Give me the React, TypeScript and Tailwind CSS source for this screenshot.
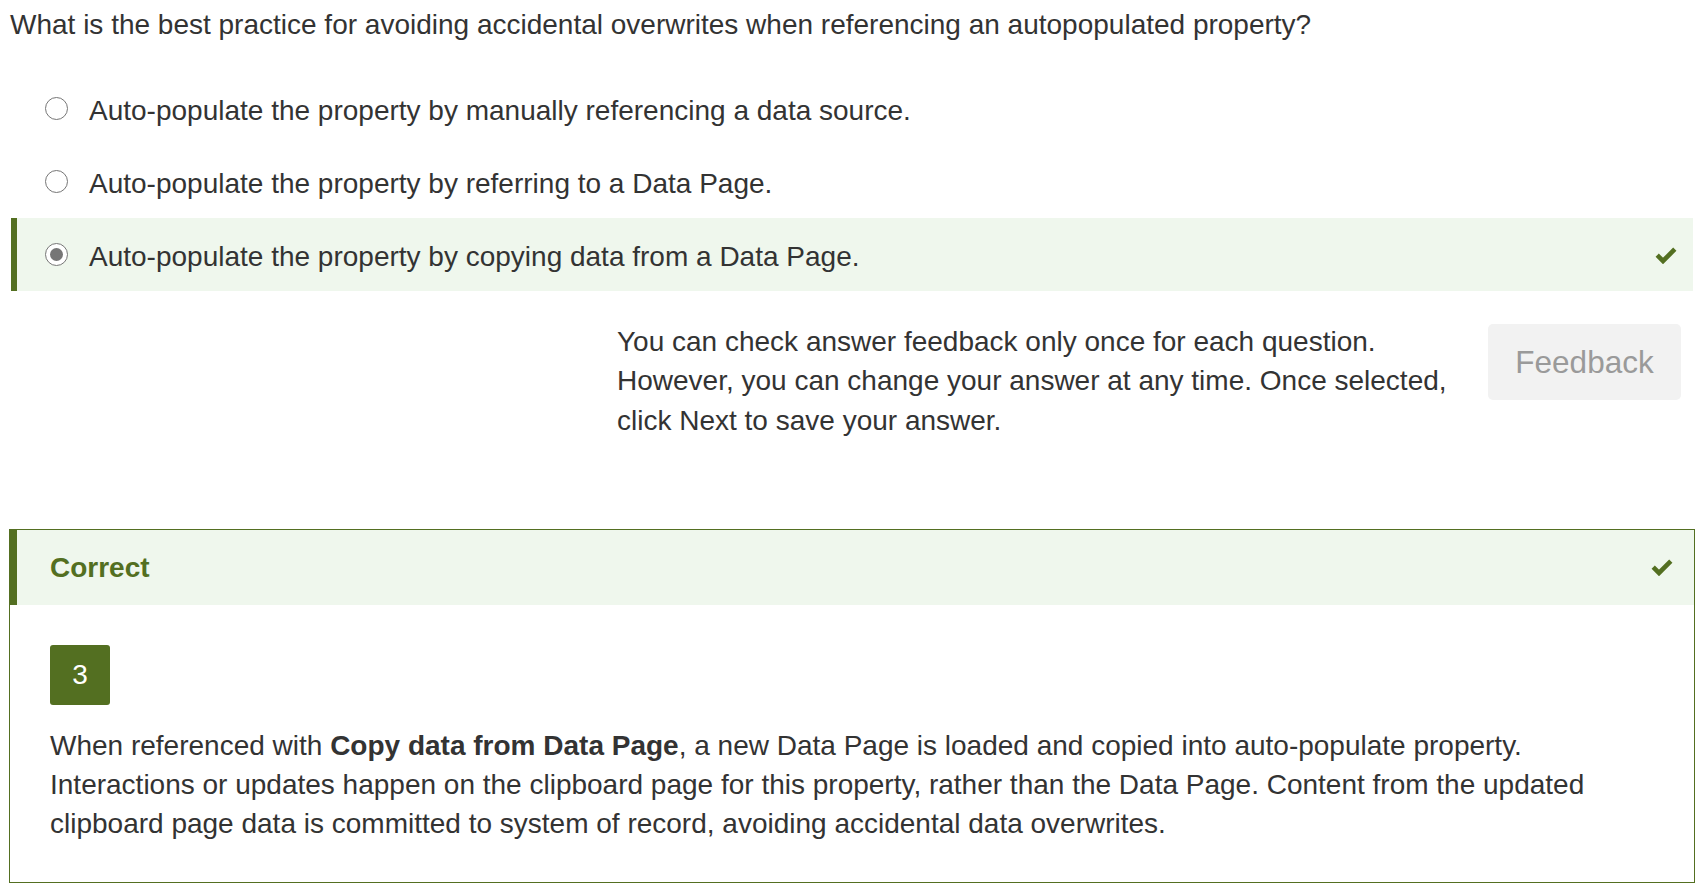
import React from "react";

const Check = ({ className = "" }: { className?: string }) => (
  <svg className={className} width="22" height="18" viewBox="0 0 22 18" fill="none">
    <path d="M2.2 9.2 L8 15 L19.8 3.2" stroke="#536f21" strokeWidth="4.6" strokeLinejoin="miter" strokeLinecap="butt" />
  </svg>
);

const Radio = ({ checked }: { checked?: boolean }) => (
  <span className="flex h-[23px] w-[23px] shrink-0 items-center justify-center rounded-full border-[1.5px] border-[#767676] bg-white">
    {checked && <span className="h-[13px] w-[13px] rounded-full bg-[#767676]" />}
  </span>
);

const Option = ({ text, selected }: { text: string; selected?: boolean }) => (
  <div
    className={
      "flex h-[73px] w-[1682px] items-center border-l-[6px] pl-[28px] pr-[16px] " +
      (selected ? "border-[#536f21] bg-[#eff7ed]" : "border-transparent bg-white")
    }
  >
    <Radio checked={selected} />
    <span className="ml-[21px] flex-1 pt-[4px] text-[28px] leading-[1.4] text-[#333333]">{text}</span>
    {selected && <Check />}
  </div>
);

export default function App() {
  return (
    <div className="min-h-[893px] w-[1707px] bg-white font-['Liberation_Sans',Arial,sans-serif] text-[#333333]">
      <div className="pl-[10px] pt-[5px] text-[28px] leading-[1.4]">
        What is the best practice for avoiding accidental overwrites when referencing an autopopulated property?
      </div>

      <div className="ml-[11px] mt-[28px] flex flex-col">
        <Option text="Auto-populate the property by manually referencing a data source." />
        <Option text="Auto-populate the property by referring to a Data Page." />
        <Option text="Auto-populate the property by copying data from a Data Page." selected />
      </div>

      <div className="mt-[31px] flex items-start pl-[617px]">
        <p className="w-[843px] text-[28px] leading-[1.4]">
          You can check answer feedback only once for each question. However, you can change your answer at any
          time. Once selected, click Next to save your answer.
        </p>
        <button className="ml-[28px] mt-[2px] flex h-[76px] w-[193px] items-center justify-center rounded-[5px] bg-[#f2f2f2] text-[31.5px] text-[#9a9a9a]">
          Feedback
        </button>
      </div>

      <div className="ml-[9px] mt-[89px] w-[1686px] border border-[#536f21]">
        <div className="flex h-[75px] items-center border-l-[7px] border-[#536f21] bg-[#eff7ed] pl-[33px] pr-[21px]">
          <span className="flex-1 text-[28px] font-bold leading-[1.4] text-[#536f21]">Correct</span>
          <Check />
        </div>
        <div className="px-[40px] pb-[39px] pt-[40px]">
          <div className="flex h-[60px] w-[60px] items-center justify-center rounded-[3px] bg-[#536f21] text-[28px] text-white">
            3
          </div>
          <p className="mt-[21px] text-[28px] leading-[1.4] text-[#333333]">
            When referenced with <b>Copy data from Data Page</b>, a new Data Page is loaded and copied into
            auto-populate property. Interactions or updates happen on the clipboard page for this property, rather
            than the Data Page. Content from the updated clipboard page data is committed to system of record, avoiding
            accidental data overwrites.
          </p>
        </div>
      </div>
    </div>
  );
}
